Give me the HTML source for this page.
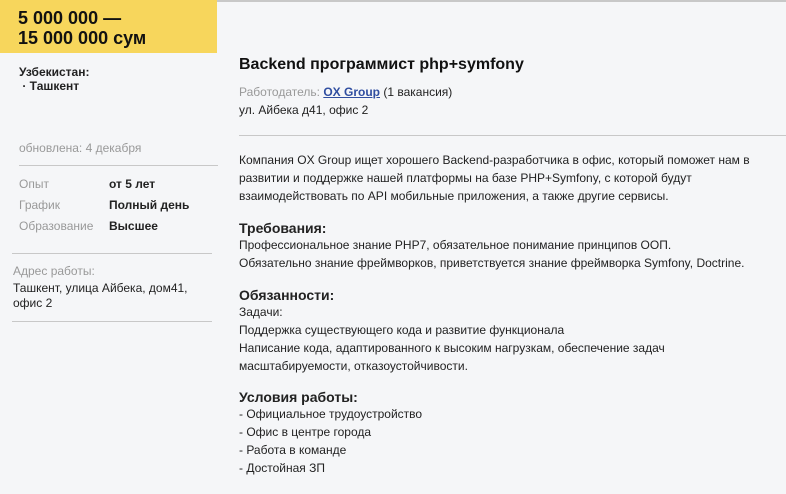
<!DOCTYPE html>
<html><head><meta charset="utf-8"><style>
body{margin:0;width:786px;height:494px;background:#f5f6f8;font-family:"Liberation Sans",Arial,sans-serif;color:#222;font-size:12px;position:relative;overflow:hidden}
.a{position:absolute;white-space:nowrap;line-height:18px}
.top{position:absolute;left:0;top:0;width:786px;height:2px;background:#c8c8c8}
.yel{position:absolute;left:0;top:0;width:217px;height:53px;background:#f7d65c}
.price{position:absolute;left:18px;top:8px;font-size:18px;font-weight:bold;line-height:20px;color:#111}
.g{color:#999}
.b{font-weight:bold}
.hr{position:absolute;height:1px;background:#c8c8c8}
h{font-weight:bold;font-size:14px}
</style></head><body>
<div class="top"></div>
<div class="yel"></div>
<div class="price">5 000 000 —<br>15 000 000 сум</div>
<div class="a b" style="left:19px;top:63px">Узбекистан:</div>
<div class="a b" style="left:19px;top:77px">&nbsp;· Ташкент</div>
<div class="a g" style="left:19px;top:139px">обновлена: 4 декабря</div>
<div class="hr" style="left:19px;top:165px;width:199px"></div>
<div class="a g" style="left:19px;top:175px">Опыт</div><div class="a b" style="left:109px;top:175px">от 5 лет</div>
<div class="a g" style="left:19px;top:196px">График</div><div class="a b" style="left:109px;top:196px">Полный день</div>
<div class="a g" style="left:19px;top:217px">Образование</div><div class="a b" style="left:109px;top:217px">Высшее</div>
<div class="hr" style="left:12px;top:253px;width:200px"></div>
<div class="a g" style="left:13px;top:262px">Адрес работы:</div>
<div class="a" style="left:13px;top:279px">Ташкент, улица Айбека, дом41,</div>
<div class="a" style="left:13px;top:294px">офис 2</div>
<div class="hr" style="left:12px;top:321px;width:200px"></div>

<div class="a b" style="left:239px;top:55px;font-size:16px;line-height:20px;color:#111">Backend программист php+symfony</div>
<div class="a" style="left:239px;top:83px"><span class="g">Работодатель:</span> <b style="color:#2f4da0;text-decoration:underline">OX Group</b> (1 вакансия)</div>
<div class="a" style="left:239px;top:101px">ул. Айбека д41, офис 2</div>
<div class="hr" style="left:239px;top:135px;width:547px"></div>
<div class="a" style="left:239px;top:151px">Компания OX Group ищет хорошего Backend-разработчика в офис, который поможет нам в<br>развитии и поддержке нашей платформы на базе PHP+Symfony, с которой будут<br>взаимодействовать по API мобильные приложения, а также другие сервисы.</div>
<div class="a" style="left:239px;top:219px"><h>Требования:</h></div>
<div class="a" style="left:239px;top:236px">Профессиональное знание PHP7, обязательное понимание принципов ООП.<br>Обязательно знание фреймворков, приветствуется знание фреймворка Symfony, Doctrine.</div>
<div class="a" style="left:239px;top:286px"><h>Обязанности:</h></div>
<div class="a" style="left:239px;top:303px">Задачи:<br>Поддержка существующего кода и развитие функционала<br>Написание кода, адаптированного к высоким нагрузкам, обеспечение задач<br>масштабируемости, отказоустойчивости.</div>
<div class="a" style="left:239px;top:388px"><h>Условия работы:</h></div>
<div class="a" style="left:239px;top:405px">- Официальное трудоустройство<br>- Офис в центре города<br>- Работа в команде<br>- Достойная ЗП</div>
</body></html>
